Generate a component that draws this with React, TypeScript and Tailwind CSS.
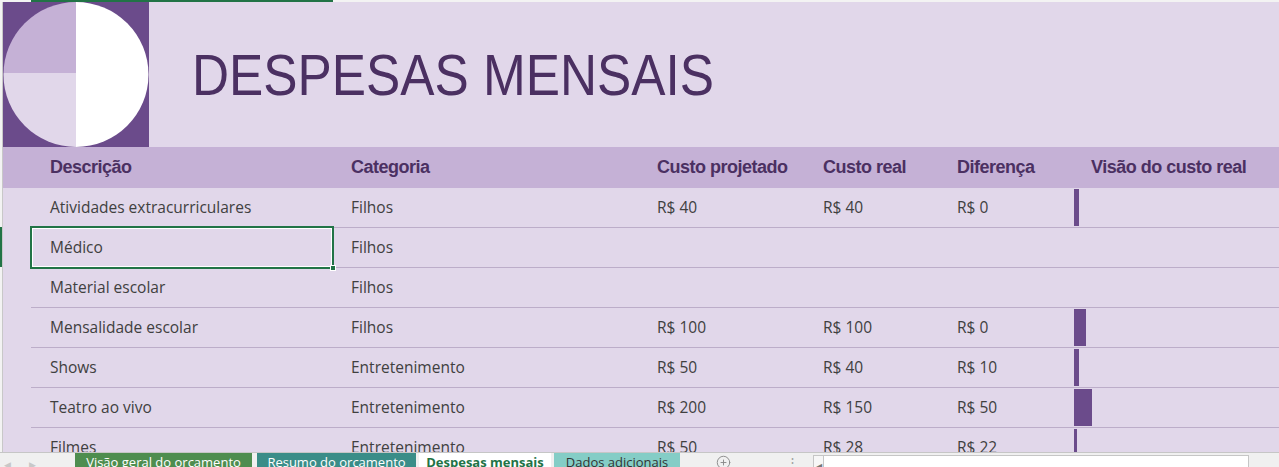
import React from "react";
import { CirclePlus } from "lucide-react";

// ---------------------------------------------------------------------------
// Types
// ---------------------------------------------------------------------------
interface Expense {
  desc: string;
  cat: string;
  proj?: number;
  real?: number;
}

// ---------------------------------------------------------------------------
// Data
// ---------------------------------------------------------------------------
const ROWS: Expense[] = [
  { desc: "Atividades extracurriculares", cat: "Filhos", proj: 40, real: 40 },
  { desc: "Médico", cat: "Filhos" },
  { desc: "Material escolar", cat: "Filhos" },
  { desc: "Mensalidade escolar", cat: "Filhos", proj: 100, real: 100 },
  { desc: "Shows", cat: "Entretenimento", proj: 50, real: 40 },
  { desc: "Teatro ao vivo", cat: "Entretenimento", proj: 200, real: 150 },
  { desc: "Filmes", cat: "Entretenimento", proj: 50, real: 28 },
];

const HEADERS = [
  "Descrição",
  "Categoria",
  "Custo projetado",
  "Custo real",
  "Diferença",
  "Visão do custo real",
];

const COLS = "grid grid-cols-[302px_306px_166px_134px_134px_1fr]";

const money = (n?: number) => (n === undefined ? "" : `R$ ${n}`);

// logo: quartered circle on a purple square
function Logo() {
  return (
    <svg width="146" height="145" viewBox="0 0 146 145" className="shrink-0">
      <rect width="146" height="145" fill="#6b4b8b" />
      <clipPath id="disc">
        <circle cx="73" cy="72.5" r="72.5" />
      </clipPath>
      <g clipPath="url(#disc)">
        <rect x="0" y="0" width="73" height="71" fill="#c5b1d6" />
        <rect x="0" y="71" width="73" height="74" fill="#e1d7ea" />
        <rect x="73" y="0" width="73" height="145" fill="#ffffff" />
      </g>
    </svg>
  );
}

function SheetTabs() {
  return (
    <div className="flex h-[30px] border-t border-[#c6c6c6] bg-[#f0f0f0] text-[13px] leading-[16px] font-['Open_Sans',sans-serif]">
      <div className="flex w-[75px] items-start gap-[18px] pl-[4px] pt-[4px] text-[9px] text-[#c8c8c8]">
        <span>◀</span>
        <span>▶</span>
      </div>
      <div className="w-[177px] bg-[#4e8d4f] pt-[1px] text-center text-white">
        Visão geral do orçamento
      </div>
      <div className="ml-[5px] w-[159px] bg-[#3a8d88] pt-[1px] text-center text-white">
        Resumo do orçamento
      </div>
      <div className="ml-[3px] w-[132px] bg-white pt-[1px] text-center font-bold text-[#217346]">
        Despesas mensais
      </div>
      <div className="ml-[3px] w-[126px] bg-[#84cdc6] pt-[1px] text-center text-[#333]">
        Dados adicionais
      </div>
      <div className="ml-[36px] pt-[2px] text-[#8a8a8a]">
        <CirclePlus size={15} strokeWidth={1.5} />
      </div>
      <div className="ml-[55px] pt-[1px] text-[#a0a0a0]">⋮</div>
      <div className="ml-[14px] mt-[2px] flex h-[28px] w-[11px] items-start justify-center border border-[#c6c6c6] bg-[#f7f7f7] pt-[2px] text-[8px] text-[#777]">
        ◀
      </div>
      <div className="mt-[2px] h-[28px] w-[425px] border border-l-0 border-[#c6c6c6] bg-white" />
    </div>
  );
}

export default function App() {
  return (
    <div className="h-[467px] w-[1279px] overflow-hidden bg-[#e1d7ea] font-['Open_Sans',sans-serif]">
      {/* column header remnant with the selected column marked */}
      <div className="flex h-[2px] bg-[#f3f3f3]">
        <div className="w-[31px]" />
        <div className="w-[302px] bg-[#217346]" />
      </div>

      <div className="flex h-[450px] overflow-hidden">
        {/* row header remnant */}
        <div className="flex w-[3px] shrink-0 flex-col border-r border-[#c8c8c8] bg-[#f3f3f3]">
          <div className="h-[225px]" />
          <div className="h-[40px] bg-[#217346]" />
        </div>

        <div className="flex min-w-0 flex-1 flex-col">
          {/* title */}
          <div className="flex h-[145px] shrink-0 items-center">
            <Logo />
            <h1 className="ml-[43px] origin-left scale-x-[0.885] whitespace-nowrap text-[58px] leading-none text-[#4b3062] font-['Liberation_Sans',Arial,sans-serif]">
              DESPESAS MENSAIS
            </h1>
          </div>

          {/* table header */}
          <div className="flex h-[41px] shrink-0 bg-[#c5b1d6] text-[18px] font-bold tracking-[-0.5px] text-[#4b3062] font-['Liberation_Sans',Arial,sans-serif]">
            <div className="w-[28px] shrink-0" />
            <div className={`${COLS} flex-1 items-center`}>
              {HEADERS.map((h, i) => (
                <div key={h} className={i === 0 ? "pl-[19px]" : "pl-[18px]"}>
                  {h}
                </div>
              ))}
            </div>
          </div>

          {/* rows */}
          {ROWS.map((r, idx) => {
            const diff =
              r.proj !== undefined && r.real !== undefined
                ? r.proj - r.real
                : undefined;
            return (
              <div key={r.desc} className="flex h-10 shrink-0 text-[15.5px] text-[#404040]">
                <div className="w-[28px] shrink-0" />
                <div className={`${COLS} flex-1 border-b border-[#bcadc9]`}>
                  <div className="relative flex items-center pl-[19px]">
                    {r.desc}
                    {idx === 1 && (
                      <div className="absolute -top-[2px] -bottom-[2px] -left-px -right-px border-2 border-[#217346] shadow-[inset_0_0_0_1px_#ffffff]">
                        <div className="absolute -bottom-[4px] -right-[4px] h-[6px] w-[6px] border border-white bg-[#217346]" />
                      </div>
                    )}
                  </div>
                  <div className="flex items-center pl-[18px]">{r.cat}</div>
                  <div className="flex items-center pl-[18px]">{money(r.proj)}</div>
                  <div className="flex items-center pl-[18px]">{money(r.real)}</div>
                  <div className="flex items-center pl-[18px]">{money(diff)}</div>
                  <div className="flex py-px pl-px">
                    {r.real !== undefined && (
                      <div
                        className="bg-[#6b4b8b]"
                        style={{ width: Math.max(3, Math.round(r.real * 0.12)) }}
                      />
                    )}
                  </div>
                </div>
              </div>
            );
          })}
        </div>
      </div>

      <SheetTabs />
    </div>
  );
}
